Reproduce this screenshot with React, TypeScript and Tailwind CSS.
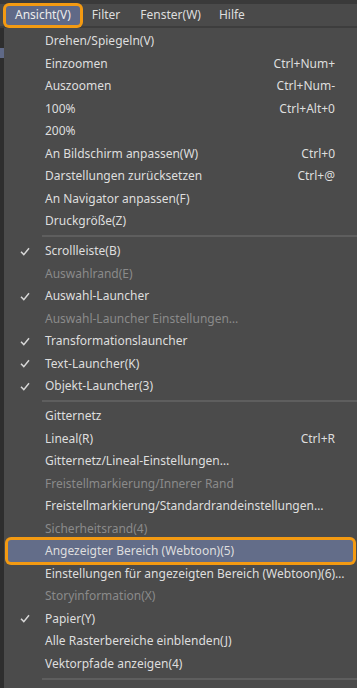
import React from 'react';
import clsx from 'clsx';

type Item =
  | { sep: true }
  | { sep?: false; label: string; shortcut?: string; checked?: boolean; disabled?: boolean; active?: boolean };

const items: Item[] = [
  { label: 'Drehen/Spiegeln(V)' },
  { label: 'Einzoomen', shortcut: 'Ctrl+Num+' },
  { label: 'Auszoomen', shortcut: 'Ctrl+Num-' },
  { label: '100%', shortcut: 'Ctrl+Alt+0' },
  { label: '200%' },
  { label: 'An Bildschirm anpassen(W)', shortcut: 'Ctrl+0' },
  { label: 'Darstellungen zurücksetzen', shortcut: 'Ctrl+@' },
  { label: 'An Navigator anpassen(F)' },
  { label: 'Druckgröße(Z)' },
  { sep: true },
  { label: 'Scrollleiste(B)', checked: true },
  { label: 'Auswahlrand(E)', disabled: true },
  { label: 'Auswahl-Launcher', checked: true },
  { label: 'Auswahl-Launcher Einstellungen…', disabled: true },
  { label: 'Transformationslauncher', checked: true },
  { label: 'Text-Launcher(K)', checked: true },
  { label: 'Objekt-Launcher(3)', checked: true },
  { sep: true },
  { label: 'Gitternetz' },
  { label: 'Lineal(R)', shortcut: 'Ctrl+R' },
  { label: 'Gitternetz/Lineal-Einstellungen…' },
  { label: 'Freistellmarkierung/Innerer Rand', disabled: true },
  { label: 'Freistellmarkierung/Standardrandeinstellungen…' },
  { label: 'Sicherheitsrand(4)', disabled: true },
  { label: 'Angezeigter Bereich (Webtoon)(5)', active: true },
  { label: 'Einstellungen für angezeigten Bereich (Webtoon)(6)…' },
  { label: 'Storyinformation(X)', disabled: true },
  { label: 'Papier(Y)', checked: true },
  { label: 'Alle Rasterbereiche einblenden(J)' },
  { label: 'Vektorpfade anzeigen(4)' },
  { sep: true },
];

// Häkchen links neben aktiven Einträgen
const Check = () => (
  <svg width="10" height="9" viewBox="0 0 10 9" className="text-[#d8d8d8]">
    <path d="M1 4.8 L3.8 7.6 L9 1.2" fill="none" stroke="currentColor" strokeWidth="1.5" />
  </svg>
);

const MenuRow: React.FC<{ item: Exclude<Item, { sep: true }> }> = ({ item }) => (
  <div
    className={clsx(
      'h-[22.5px] flex items-center',
      item.active && 'mx-[4px] bg-[#636d89] rounded-[3px] ring-[3px] ring-[#f39a12]'
    )}
  >
    <div className={clsx('flex justify-center', item.active ? 'w-[37px]' : 'w-[41px]')}>
      {item.checked && <Check />}
    </div>
    <span className={clsx('flex-1 whitespace-nowrap', item.disabled ? 'text-[#8a8a8a]' : 'text-[#dedede]')}>
      {item.label}
    </span>
    {item.shortcut && <span className="pr-[22px] text-[#dedede] whitespace-nowrap">{item.shortcut}</span>}
  </div>
);

export default function App() {
  return (
    <div
      className="w-[357px] h-[688px] overflow-hidden bg-[#2e2e2e] flex flex-col text-[12px] leading-none"
      style={{ fontFamily: '"Noto Sans", sans-serif' }}
    >
      {/* Menüleiste */}
      <div className="h-[28px] shrink-0 bg-[#4a4a4a] border-t-[4px] border-t-[#3a3a3a] border-b-2 border-b-[#3d3d3d] flex items-center text-[#dedede]">
        <div className="ml-[6px] h-[19px] px-[9px] flex items-center bg-[#5f6987] rounded-[3px] ring-[3px] ring-[#f39a12] text-[#ececec]">
          Ansicht(V)
        </div>
        <div className="ml-[12px]">Filter</div>
        <div className="ml-[20px]">Fenster(W)</div>
        <div className="ml-[18px]">Hilfe</div>
      </div>

      <div className="flex flex-1">
        {/* Rand links */}
        <div className="w-[4px] shrink-0 flex flex-col">
          <div className="h-[20px]" />
          <div className="h-[10px] bg-[#5f6987]" />
        </div>
        {/* Dropdown */}
        <div className="flex-1 bg-[#4b4b4b] pt-[1.75px]">
          {items.map((item, i) =>
            item.sep ? (
              <div key={i} className="h-[7.5px] flex items-center pl-[38px]">
                <div className="h-[2px] w-full bg-[#5e5e5e]" />
              </div>
            ) : (
              <MenuRow key={i} item={item} />
            )
          )}
        </div>
      </div>
    </div>
  );
}
